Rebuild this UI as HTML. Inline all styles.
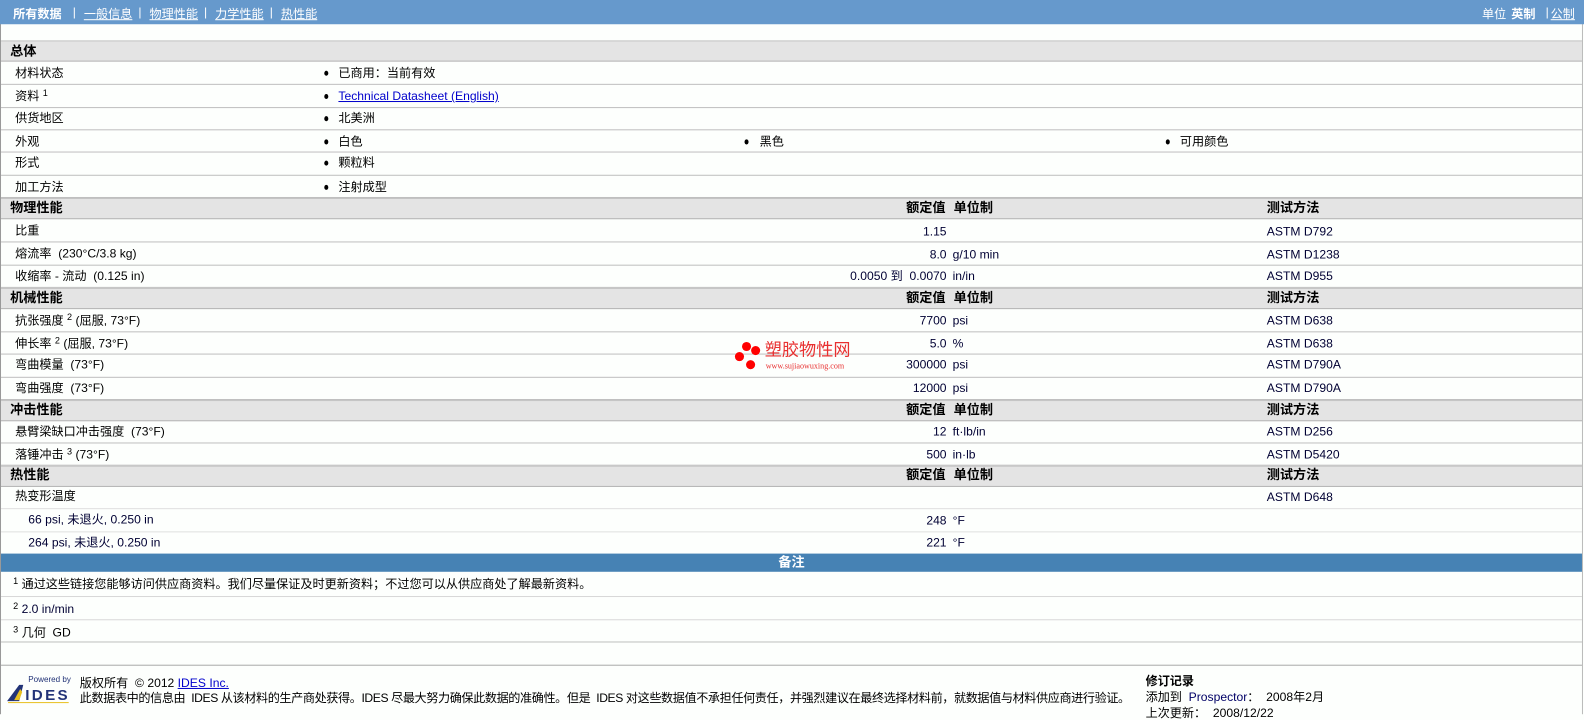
<!DOCTYPE html>
<html><head><meta charset="utf-8">
<style>
*{margin:0;padding:0;box-sizing:border-box}
html,body{width:1584px;height:714px;overflow:hidden;background:#fdfffd}
#w{position:absolute;left:0;top:0;width:1568px;height:707px;transform:scale(1.0102);transform-origin:0 0;font-family:"Liberation Sans","Noto Sans CJK SC",sans-serif;font-size:12px;color:#000}
.frame{position:absolute;left:0;top:0;width:1567px;height:707px;border-left:1px solid #999;border-right:1px solid #bbb}
.nav{position:absolute;left:0;top:0;width:1568px;height:24px;background:#6699cc;color:#fff;font-size:12px}
.nav span{position:absolute;top:5px;white-space:nowrap}
.nav u{text-decoration:underline}
.r{position:absolute;left:1px;width:1565px;border-bottom:1px solid #bfbfbf}
.h{background:#e4e4e4;border-top:1px solid #c4c4c4;border-bottom:1px solid #b4b4b4;font-weight:bold;font-size:13px}
.t{position:absolute;white-space:nowrap;line-height:14px}
.v{position:absolute;right:629px;white-space:nowrap;line-height:14px;text-align:right;color:#000033}
.u{position:absolute;left:942px;white-space:nowrap;line-height:14px;color:#000033}
.m{position:absolute;left:1253px;white-space:nowrap;line-height:14px;color:#000033}
.b{position:absolute;width:4px;height:5px;border-radius:50%;background:#000}
sup{font-size:9px;vertical-align:top;position:relative;top:-3px}
a{color:#00c;text-decoration:underline}
</style></head><body><div id="w">
<div class="frame"></div>
<div class="nav">
<span style="left:13px;font-weight:bold">所有数据</span>
<span style="left:72px">|</span>
<span style="left:83px"><u>一般信息</u></span>
<span style="left:137px">|</span>
<span style="left:148px"><u>物理性能</u></span>
<span style="left:202px">|</span>
<span style="left:213px"><u>力学性能</u></span>
<span style="left:267px">|</span>
<span style="left:278px"><u>热性能</u></span>
<span style="left:1467px">单位</span>
<span style="left:1496px;font-weight:bold">英制</span>
<span style="left:1530px">|</span>
<span style="left:1535px"><u>公制</u></span>
</div>

<div class="r h" style="top:40px;height:21px"><span class="t" style="left:9px;top:3px">总体</span></div>
<div class="r" style="top:61px;height:23px"><span class="t" style="left:14px;top:4px">材料状态</span><i class="b" style="left:320px;top:9px"></i><span class="t" style="left:334px;top:4px">已商用：当前有效</span></div>
<div class="r" style="top:84px;height:23px"><span class="t" style="left:14px;top:4px">资料 <sup>1</sup></span><i class="b" style="left:320px;top:9px"></i><span class="t" style="left:334px;top:4px"><a>Technical Datasheet (English)</a></span></div>
<div class="r" style="top:107px;height:22px"><span class="t" style="left:14px;top:3px">供货地区</span><i class="b" style="left:320px;top:8px"></i><span class="t" style="left:334px;top:3px">北美洲</span></div>
<div class="r" style="top:129px;height:22px"><span class="t" style="left:14px;top:4px">外观</span><i class="b" style="left:320px;top:9px"></i><span class="t" style="left:334px;top:4px">白色</span><i class="b" style="left:736px;top:9px"></i><span class="t" style="left:751px;top:4px">黑色</span><i class="b" style="left:1153px;top:9px"></i><span class="t" style="left:1167px;top:4px">可用颜色</span></div>
<div class="r" style="top:151px;height:23px"><span class="t" style="left:14px;top:3px">形式</span><i class="b" style="left:320px;top:8px"></i><span class="t" style="left:334px;top:3px">颗粒料</span></div>
<div class="r" style="top:174px;height:22px"><span class="t" style="left:14px;top:4px">加工方法</span><i class="b" style="left:320px;top:9px"></i><span class="t" style="left:334px;top:4px">注射成型</span></div>

<div class="r h" style="top:196px;height:21px"><span class="t" style="left:9px;top:2px">物理性能</span><span class="t" style="left:896px;top:2px">额定值</span><span class="t" style="left:943px;top:2px">单位制</span><span class="t" style="left:1253px;top:2px">测试方法</span></div>
<div class="r" style="top:217px;height:23px"><span class="t" style="left:14px;top:4px">比重</span><span class="v" style="top:5px">1.15</span><span class="m" style="top:5px">ASTM D792</span></div>
<div class="r" style="top:240px;height:23px"><span class="t" style="left:14px;top:4px">熔流率&nbsp;&nbsp;(230°C/3.8 kg)</span><span class="v" style="top:5px">8.0</span><span class="u" style="top:5px">g/10 min</span><span class="m" style="top:5px">ASTM D1238</span></div>
<div class="r" style="top:263px;height:22px"><span class="t" style="left:14px;top:3px">收缩率&nbsp;-&nbsp;流动&nbsp;&nbsp;(0.125 in)</span><span class="v" style="top:3px">0.0050 到&nbsp;&nbsp;0.0070</span><span class="u" style="top:3px">in/in</span><span class="m" style="top:3px">ASTM D955</span></div>

<div class="r h" style="top:285px;height:21px"><span class="t" style="left:9px;top:2px">机械性能</span><span class="t" style="left:896px;top:2px">额定值</span><span class="t" style="left:943px;top:2px">单位制</span><span class="t" style="left:1253px;top:2px">测试方法</span></div>
<div class="r" style="top:306px;height:23px"><span class="t" style="left:14px;top:4px">抗张强度 <sup>2</sup> (屈服, 73°F)</span><span class="v" style="top:4px">7700</span><span class="u" style="top:4px">psi</span><span class="m" style="top:4px">ASTM D638</span></div>
<div class="r" style="top:329px;height:22px"><span class="t" style="left:14px;top:4px">伸长率 <sup>2</sup> (屈服, 73°F)</span><span class="v" style="top:4px">5.0</span><span class="u" style="top:4px">%</span><span class="m" style="top:4px">ASTM D638</span></div>
<div class="r" style="top:351px;height:23px"><span class="t" style="left:14px;top:3px">弯曲模量&nbsp;&nbsp;(73°F)</span><span class="v" style="top:3px">300000</span><span class="u" style="top:3px">psi</span><span class="m" style="top:3px">ASTM D790A</span></div>
<div class="r" style="top:374px;height:22px"><span class="t" style="left:14px;top:3px">弯曲强度&nbsp;&nbsp;(73°F)</span><span class="v" style="top:3px">12000</span><span class="u" style="top:3px">psi</span><span class="m" style="top:3px">ASTM D790A</span></div>

<div class="r h" style="top:396px;height:21px"><span class="t" style="left:9px;top:2px">冲击性能</span><span class="t" style="left:896px;top:2px">额定值</span><span class="t" style="left:943px;top:2px">单位制</span><span class="t" style="left:1253px;top:2px">测试方法</span></div>
<div class="r" style="top:417px;height:22px"><span class="t" style="left:14px;top:3px">悬臂梁缺口冲击强度&nbsp;&nbsp;(73°F)</span><span class="v" style="top:3px">12</span><span class="u" style="top:3px">ft·lb/in</span><span class="m" style="top:3px">ASTM D256</span></div>
<div class="r" style="top:439px;height:22px"><span class="t" style="left:14px;top:4px">落锤冲击 <sup>3</sup> (73°F)</span><span class="v" style="top:4px">500</span><span class="u" style="top:4px">in·lb</span><span class="m" style="top:4px">ASTM D5420</span></div>

<div class="r h" style="top:461px;height:21px"><span class="t" style="left:9px;top:1px">热性能</span><span class="t" style="left:896px;top:1px">额定值</span><span class="t" style="left:943px;top:1px">单位制</span><span class="t" style="left:1253px;top:1px">测试方法</span></div>
<div class="r" style="top:482px;height:22px;border-bottom-color:#e0e0e0"><span class="t" style="left:14px;top:2px">热变形温度</span><span class="m" style="top:3px">ASTM D648</span></div>
<div class="r" style="top:504px;height:23px;border-bottom-color:#e0e0e0"><span class="t" style="left:27px;top:3px;color:#000033">66 psi, 未退火, 0.250 in</span><span class="v" style="top:4px">248</span><span class="u" style="top:4px">°F</span></div>
<div class="r" style="top:527px;height:21px;border-bottom:none"><span class="t" style="left:27px;top:3px;color:#000033">264 psi, 未退火, 0.250 in</span><span class="v" style="top:3px">221</span><span class="u" style="top:3px">°F</span></div>

<div style="position:absolute;left:1px;top:548px;width:1565px;height:18px;background:#4682b4;color:#fff;font-weight:bold;font-size:13px;text-align:center;line-height:17px">备注</div>
<div class="r" style="top:566px;height:25px;border-bottom-color:#d8d8d8"><span class="t" style="left:12px;top:5px"><sup>1</sup> 通过这些链接您能够访问供应商资料。我们尽量保证及时更新资料；不过您可以从供应商处了解最新资料。</span></div>
<div class="r" style="top:591px;height:23px;border-bottom-color:#d8d8d8"><span class="t" style="left:12px;top:5px"><sup>2</sup> <span style="color:#000033">2.0 in/min</span></span></div>
<div class="r" style="top:614px;height:22px"><span class="t" style="left:12px;top:5px"><sup>3</sup> 几何&nbsp;&nbsp;GD</span></div>
<div class="r" style="top:636px;height:23px;border-bottom-color:#aaa"></div>

<svg style="position:absolute;left:6px;top:667px" width="64" height="30" viewBox="0 0 64 30">
<text x="22" y="8" font-family="Liberation Sans" font-size="8" fill="#223377">Powered by</text>
<polygon points="1,27 13,11 17,11 13,27" fill="#223377"/>
<polygon points="8,26 14,15 16,18 13,26" fill="#e8c020"/>
<text x="19" y="26" font-family="Liberation Sans" font-size="15" font-weight="bold" fill="#223377" textLength="42">IDES</text>
<rect x="2" y="28" width="60" height="1" fill="#e8c020"/>
</svg>
<span class="t" style="left:79px;top:669px">版权所有&nbsp;&nbsp;© 2012 <a>IDES Inc.</a></span>
<span class="t" style="left:79px;top:684px;letter-spacing:-0.4px">此数据表中的信息由&nbsp;&nbsp;IDES 从该材料的生产商处获得。IDES 尽最大努力确保此数据的准确性。但是&nbsp;&nbsp;IDES 对这些数据值不承担任何责任，并强烈建议在最终选择材料前，就数据值与材料供应商进行验证。</span>
<span class="t" style="left:1134px;top:667px;font-weight:bold">修订记录</span>
<span class="t" style="left:1134px;top:683px">添加到&nbsp;&nbsp;<span style="color:#000066">Prospector</span>：&nbsp;&nbsp;2008年2月</span>
<span class="t" style="left:1134px;top:699px">上次更新：&nbsp;&nbsp;2008/12/22</span>

<svg style="position:absolute;left:720px;top:330px" width="140" height="42">
<circle cx="19" cy="13" r="4.5" fill="#f00"/><circle cx="28" cy="17" r="4.5" fill="#f00"/>
<circle cx="12" cy="23" r="4.5" fill="#f00"/><circle cx="23" cy="31" r="4.5" fill="#f00"/>
<text x="37" y="22" font-family="Noto Sans CJK SC,sans-serif" font-size="17" fill="#e83030">塑胶物性网</text>
<text x="38" y="35" font-family="Liberation Serif,serif" font-size="8" fill="#e83030">www.sujiaowuxing.com</text>
</svg>
</div></body></html>
